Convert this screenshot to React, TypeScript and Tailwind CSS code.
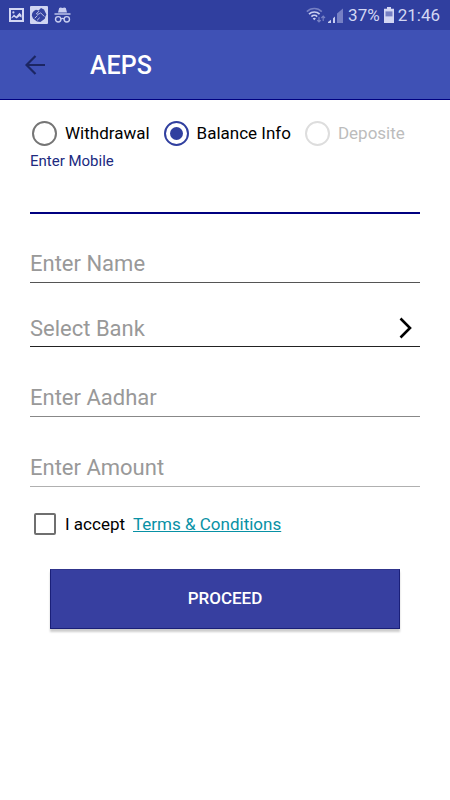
import { useState } from "react";

type Mode = "withdrawal" | "balance" | "deposit";

interface ModeOption {
  id: Mode;
  label: string;
  disabled?: boolean;
}

interface FieldProps {
  id: string;
  label: string;
  className: string;
  inputMode?: "text" | "numeric";
}

const modes: ModeOption[] = [
  { id: "withdrawal", label: "Withdrawal" },
  { id: "balance", label: "Balance Info" },
  { id: "deposit", label: "Deposite", disabled: true },
];

const banks = ["State Bank of India", "HDFC Bank", "ICICI Bank", "Axis Bank"];

function PictureIcon() {
  return (
    <svg width="15" height="14" viewBox="0 0 15 14" fill="none" aria-hidden="true">
      <path d="M1 1h13v12H1z" stroke="#d3d7f3" strokeWidth="2" />
      <path d="M2.5 9.4 5 6.4l2.2 2 3.3-3.6 2 2.2v2.8l-2-1.6-2.8 2.4-2.7-1.8-2.5 1.6z" fill="#d3d7f3" />
      <circle cx="4.4" cy="4.4" r="1.1" fill="#d3d7f3" />
    </svg>
  );
}

function HandshakeIcon() {
  return (
    <svg width="18" height="18" viewBox="0 0 18 18" fill="none" aria-hidden="true">
      <rect width="18" height="18" rx="1" fill="#d0d5f2" />
      <path d="M1.8 9.4Q2 5.4 6 3.8l2.6.6L11 2l3 1.4 2.4 5-1 2.2-.6 2.2-4.4 3.2-3.4-.4L3 12.4z" fill="#3543a0" />
      <path d="M8.8 5.4 6.4 7.8q1.4 1 2.8 0l1.4-1 3.4 3.4M5 12l2.2-2.2M7.4 14l2-2" stroke="#d0d5f2" strokeWidth="0.9" strokeLinecap="round" />
    </svg>
  );
}

function IncognitoIcon() {
  return (
    <svg width="17" height="17" viewBox="0 0 17 17" fill="none" aria-hidden="true">
      <path d="M4 5.5 5.2.9l1.4-.4 1.9.6 1.9-.6 1.4.4L13 5.5z" fill="#c8cef0" />
      <path d="M.5 6.3h16v1.4H.5z" fill="#c8cef0" />
      <circle cx="4.2" cy="12.3" r="2.7" stroke="#c8cef0" strokeWidth="1.4" />
      <circle cx="12.8" cy="12.3" r="2.7" stroke="#c8cef0" strokeWidth="1.4" />
      <path d="M6.9 11.9q1.6-1 3.2 0" stroke="#c8cef0" strokeWidth="1.3" />
    </svg>
  );
}

function WifiIcon() {
  return (
    <svg width="20" height="16" viewBox="0 0 20 16" fill="none" aria-hidden="true">
      <path d="M.8 4.6a10.5 10.5 0 0 1 15 0" stroke="#7680c4" strokeWidth="1.6" />
      <path d="M3 7.2a7.5 7.5 0 0 1 10.6 0M5.4 9.6a4.2 4.2 0 0 1 5.8 0" stroke="#c8cef0" strokeWidth="1.7" />
      <path d="m8.3 13.2-1.6-1.8a2.3 2.3 0 0 1 3.2 0z" fill="#c8cef0" />
      <path d="M13 10v5m-1.8-1.8L13 15l1.8-1.8M17.2 14V9.2m-1.8 1.8 1.8-1.8L19 11" stroke="#7680c4" strokeWidth="1.2" />
    </svg>
  );
}

function SignalIcon() {
  return (
    <svg width="16" height="15" viewBox="0 0 16 15" aria-hidden="true">
      <path d="M0 15v-1l3-2.3V15z" fill="#c8cef0" />
      <path d="M5 15v-4.8L7 8.4V15z" fill="#c8cef0" />
      <path d="M9 15V5.6L15 .4V15z" fill="#7680c4" />
    </svg>
  );
}

function BatteryIcon() {
  return (
    <svg width="10" height="16" viewBox="0 0 10 16" aria-hidden="true">
      <path d="M3 0h4v1.8h3V16H0V1.8h3z" fill="#d3d7f3" />
      <path d="M1.5 4.4h7v5h-7z" fill="#7680c4" />
    </svg>
  );
}

function StatusBar() {
  return (
    <div className="flex h-[30px] items-center justify-between bg-[#303f9f] pl-[9px] pr-[10px] text-[#d3d7f3]">
      <div className="flex items-center gap-[6px]">
        <PictureIcon />
        <HandshakeIcon />
        <IncognitoIcon />
      </div>
      <div className="flex items-center text-[17px] leading-6">
        <WifiIcon />
        <span className="ml-[2px]">
          <SignalIcon />
        </span>
        <span className="ml-1">37%</span>
        <span className="mx-1">
          <BatteryIcon />
        </span>
        <span>21:46</span>
      </div>
    </div>
  );
}

function Header() {
  return (
    <header className="flex h-[70px] items-center border-b border-[#000080] bg-[#3f51b5] pl-[25px]">
      <button type="button" aria-label="Back" className="mr-[45px]">
        <svg width="20" height="20" viewBox="0 0 20 20" fill="none" stroke="#1c2663" strokeWidth="2.2" aria-hidden="true">
          <path d="M20 10H2M10.5 1 1.5 10l9 9" />
        </svg>
      </button>
      <h1 className="pt-[3px] text-[25px] leading-8 font-medium text-white">AEPS</h1>
    </header>
  );
}

function Field({ id, label, className, inputMode = "text" }: FieldProps) {
  return (
    <input
      id={id}
      type="text"
      inputMode={inputMode}
      placeholder={label}
      aria-label={label}
      className={`block w-full border-b pb-1 text-[22px] leading-7 text-black outline-none placeholder:text-[#999999] ${className}`}
    />
  );
}

export default function App() {
  const [mode, setMode] = useState<Mode>("balance");
  const [mobile, setMobile] = useState("");
  const [bank, setBank] = useState("");
  const [accepted, setAccepted] = useState(false);

  return (
    <div className="min-h-screen bg-white font-['Roboto',sans-serif]">
      <StatusBar />
      <Header />

      <form className="px-[30px] pt-5" onSubmit={(e) => e.preventDefault()}>
        {/* Transaction type */}
        <div role="radiogroup" aria-label="Transaction type" className="flex flex-wrap gap-x-[14px] pl-[2px]">
          {modes.map((option) => (
            <label
              key={option.id}
              className={`flex items-center gap-2 text-[17px] leading-[26px] ${option.disabled ? "text-[#bcbcbc]" : "text-black"}`}
            >
              <input
                type="radio"
                name="mode"
                value={option.id}
                checked={mode === option.id}
                disabled={option.disabled}
                onChange={() => setMode(option.id)}
                className="size-[25px] shrink-0 appearance-none rounded-full border-2 border-[#757575] bg-clip-content p-[4px] checked:border-[#303f9f] checked:bg-[#303f9f] disabled:border-[#dddddd]"
              />
              {option.label}
            </label>
          ))}
        </div>

        {/* Focused field with its floating label */}
        <label htmlFor="mobile" className="mt-[5px] block text-[15px] leading-5 text-[#202a80]">
          Enter Mobile
        </label>
        <input
          id="mobile"
          type="tel"
          value={mobile}
          onChange={(e) => setMobile(e.target.value)}
          className="block h-[43px] w-full border-b-2 border-[#000080] text-[22px] text-black outline-none"
        />

        <Field id="name" label="Enter Name" className="mt-9 border-[#555555]" />

        <div className="relative mt-8">
          <select
            aria-label="Select Bank"
            value={bank}
            onChange={(e) => setBank(e.target.value)}
            className="block w-full appearance-none border-b border-[#222222] pb-[3px] text-[22px] leading-7 text-[#999999] outline-none"
          >
            <option value="">Select Bank</option>
            {banks.map((name) => (
              <option key={name} value={name}>
                {name}
              </option>
            ))}
          </select>
          <svg
            width="13"
            height="22"
            viewBox="0 0 13 22"
            fill="none"
            className="pointer-events-none absolute right-2 top-[2px]"
            aria-hidden="true"
          >
            <path d="m1.5 1.5 9.5 9.5-9.5 9.5" stroke="black" strokeWidth="2.6" />
          </svg>
        </div>

        <Field id="aadhar" label="Enter Aadhar" inputMode="numeric" className="mt-[37px] border-[#888888]" />
        <Field id="amount" label="Enter Amount" inputMode="numeric" className="mt-[37px] border-[#b0b0b0]" />

        {/* Terms */}
        <div className="mt-6 flex items-center pl-[4px] text-[17px] leading-[26px]">
          <input
            id="terms"
            type="checkbox"
            checked={accepted}
            onChange={(e) => setAccepted(e.target.checked)}
            className="size-[22px] appearance-none rounded-[2px] border-2 border-[#6f6f6f] checked:bg-[#303f9f]"
          />
          <label htmlFor="terms" className="ml-[9px] text-black">
            I accept
          </label>
          <a href="#terms" className="ml-2 text-[#0891a5] underline">
            Terms &amp; Conditions
          </a>
        </div>

        <div className="mt-8 px-5">
          <button
            type="submit"
            className="h-[60px] w-full border border-[#1a1f78] border-t-[#30358c] bg-[#373fa0] text-[17px] font-medium text-white shadow-[0_3px_2px_rgba(0,0,0,0.2)]"
          >
            PROCEED
          </button>
        </div>
      </form>
    </div>
  );
}
